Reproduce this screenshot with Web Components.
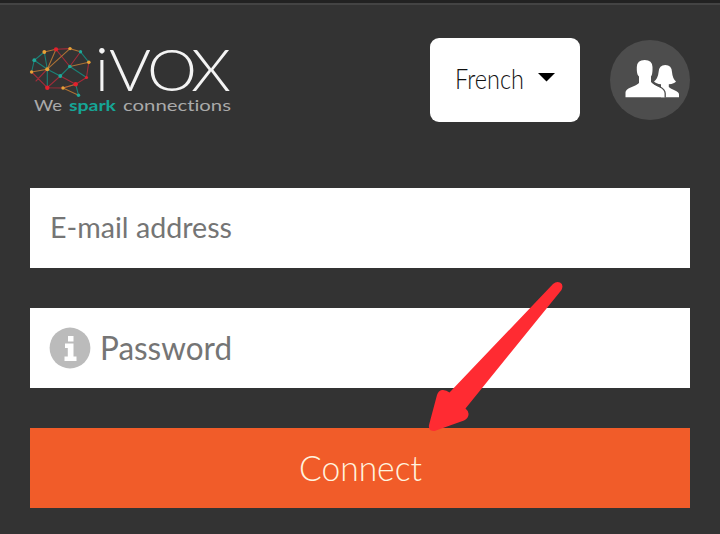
<!DOCTYPE html>
<html lang="en">
<head>
<meta charset="utf-8">
<title>iVOX</title>
<style>html,body{margin:0;background:#333}</style>
</head>
<body>
<login-page></login-page>
<script>
const define = (name, html) => customElements.define(name, class extends HTMLElement {
  constructor() {
    super();
    const t = document.createElement('template');
    t.innerHTML = html;
    this.attachShadow({ mode: 'open' }).append(t.content.cloneNode(true));
  }
});

// A label stretched to a given width: w, h = box; size, weight; base = baseline
customElements.define('fit-label', class extends HTMLElement {
  connectedCallback() {
    const a = n => this.getAttribute(n);
    this.attachShadow({ mode: 'open' }).innerHTML = `
      <style>:host{display:block;flex:none}svg{display:block;overflow:visible}
      text{font-family:Lato,"Liberation Sans",sans-serif;fill:currentColor}</style>
      <svg width="${a('w')}" height="${a('h')}"><text y="${a('base')}" font-size="${a('size')}"
      font-weight="${a('weight')}" textLength="${a('w')}" lengthAdjust="spacingAndGlyphs">${a('label')}</text></svg>`;
  }
});

define('brand-logo', `
<style>
:host{display:block;width:202px;height:72px}
svg{display:block;overflow:visible}
text{font-family:Lato,"Liberation Sans",sans-serif;font-weight:300;fill:#f4f4f4;font-variant-ligatures:none}
.tag{font-weight:400;fill:#aaa}
.spark{fill:#16a596;font-weight:700}
</style>
<svg width="202" height="72" viewBox="30 44 202 72">
 <g fill="none" stroke-width="1.1" stroke-linecap="round" opacity=".85">
  <g stroke="#b52b3b"><path d="M56 49.300L70 48.600M56 49.300L69.800 66.500M31.600 72L47.300 87.700M36 81L47.300 69.200M47.300 87.700L63 88L75.700 84.200L86.500 77.500M75.700 84.200L60.300 76M86.500 77.500L88.800 62.200M47.300 87.700L60.300 76M69.800 66.500L80.500 51.800"/></g>
  <g stroke="#178f83"><path d="M44.300 52L34.300 60.200L31.600 72M34.300 60.200L47.300 69.200L60.300 76L69.800 66.500L86.500 77.500M44.300 52L47.300 69.200L47.300 87.700M75.700 84.200L78.500 95.300M80.500 51.800L88.800 62.200"/></g>
  <g stroke="#c27d36"><path d="M44.300 52L56 49.300L47.300 69.200L70 48.600L80.500 51.800M47.300 69.200L31.600 72M69.800 66.500L88.800 62.200M63 88L78.500 95.300M63 88L75.700 84.200"/></g>
 </g>
 <g fill="#e4202c"><circle cx="56" cy="49.3" r="2.1"/><circle cx="47.3" cy="87.7" r="2.2"/><circle cx="75.7" cy="84.2" r="2.2"/><circle cx="86.5" cy="77.5" r="1.6"/></g>
 <g fill="#e9a136"><circle cx="44.3" cy="52" r="1.9"/><circle cx="70" cy="48.6" r="1.7"/><circle cx="88.8" cy="62.2" r="1.8"/><circle cx="47.3" cy="69.2" r="2"/><circle cx="31.6" cy="72" r="1.7"/><circle cx="63" cy="88" r="1.7"/></g>
 <g fill="#1eaa9a"><circle cx="34.3" cy="60.2" r="1.9"/><circle cx="80.5" cy="51.8" r="1.7"/><circle cx="69.8" cy="66.5" r="1.8"/><circle cx="60.3" cy="76" r="1.9"/><circle cx="78.5" cy="95.3" r="1.7"/></g>
 <text y="91" font-size="58"><tspan x="95" font-size="62">i</tspan><tspan x="109" textLength="42" lengthAdjust="spacingAndGlyphs">V</tspan><tspan x="147" textLength="50" lengthAdjust="spacingAndGlyphs">O</tspan><tspan x="191" textLength="40" lengthAdjust="spacingAndGlyphs">X</tspan></text>
 <text class="tag" x="34" y="111" font-size="14.500" textLength="28" lengthAdjust="spacingAndGlyphs">We</text>
 <text class="tag spark" x="69" y="111" font-size="14.500" textLength="47" lengthAdjust="spacingAndGlyphs">spark</text>
 <text class="tag" x="123" y="111" font-size="14.500" textLength="108" lengthAdjust="spacingAndGlyphs">connections</text>
</svg>`);

define('language-select', `
<style>
:host{display:flex;box-sizing:border-box;width:150px;height:84px;padding-left:25px;border-radius:9px;background:#fff;color:#111;align-items:center;gap:14px}
svg{display:block;margin-top:-6px}
</style>
<fit-label label="French" w="69" h="32" base="25" size="26.5" weight="300"></fit-label>
<svg width="17" height="9"><path d="M0 0H17L8.5 8.500Z" fill="#000"/></svg>`);

define('account-button', `
<style>:host{display:block;width:80px;height:80px;border-radius:50%;background:#4d4d4d}svg{display:block}</style>
<svg width="80" height="80" viewBox="610 40 80 80" fill="#fff">
 <path d="M661 97.300V84.300Q656 83.800 654 81.500Q658 78.500 658.600 72Q659 65 665.300 65Q671.700 65 672 72Q672.500 78.500 676 81.500Q674.500 83.800 668.800 84.300V87Q670 88.500 674.500 90.300Q679 92.300 679 94.500V97.300Z"/>
 <path d="M625.500 97.300V92.500Q625.500 90 630 87.800Q638 84.500 639 83V76.500Q637 75 636.800 70V67Q637 60 644.700 60Q652.300 60 652.500 67V70Q652.300 75 651 76.500V82Q652.500 84 659 87Q664.700 90 664.700 93.500V97.300Z"/>
 <path d="M652.500 81.800Q654 84.300 659.500 86.500Q665.200 89.500 665.200 93.500V97.500" fill="none" stroke="#4d4d4d" stroke-width="1.300"/>
</svg>`);

define('text-field', `
<style>:host{display:flex;box-sizing:border-box;height:80px;background:#fff;color:#757575;padding-left:20px;align-items:center;gap:12px}</style>
<slot></slot>`);

define('info-icon', `
<style>:host{display:block;width:40px;height:42px}svg{display:block;overflow:visible}</style>
<svg width="40" height="42" viewBox="0 0 40 42"><circle cx="20" cy="21" r="20.400" fill="#bbb"/>
<path d="M18 9h5.500v5.500h-5.500zM15 16.500h8.500v13h3v4.500h-12v-4.500h3.300v-8.500h-2.800z" fill="#fff"/></svg>`);

define('submit-button', `
<style>:host{display:flex;height:80px;background:#f15c29;color:#fff3df;align-items:center;justify-content:center}</style>
<slot></slot>`);

define('pointer-arrow', `
<style>:host{display:block;position:absolute;left:420px;top:267px;pointer-events:none}svg{display:block}</style>
<svg width="160" height="170" viewBox="0 0 160 170"><path d="M133 14L29.500 122.500Q26 119.500 22 120Q18.500 120.500 17 125L9 155Q8 161 14.500 161L44 150.500Q49 148 48.500 143.500Q48 140.500 45.500 138.500L141.500 20Q144 14.500 140 12.500Q136.500 11 133 14Z" fill="#ff2b32"/></svg>`);

define('login-page', `
<style>
:host{display:block;position:relative;box-sizing:border-box;width:720px;height:534px;background:#333;padding:35px 30px 0;border-top:3px solid #222;box-shadow:inset 0 2px #444;overflow:hidden}
header{display:flex;height:84px;align-items:center}
brand-logo{margin-right:auto}
account-button{margin-left:30px}
main{display:grid;gap:40px;margin-top:66px}
</style>
<header><brand-logo></brand-logo><language-select></language-select><account-button></account-button></header>
<main>
 <text-field><fit-label label="E-mail address" w="182" h="40" base="30" size="29.500" weight="400"></fit-label></text-field>
 <text-field><info-icon></info-icon><fit-label label="Password" w="132" h="40" base="32" size="32" weight="400" style="margin-left:-2px"></fit-label></text-field>
 <submit-button><fit-label label="Connect" w="123" h="40" base="33" size="34.500" weight="300"></fit-label></submit-button>
</main>
<pointer-arrow></pointer-arrow>`);
</script>
</body>
</html>
